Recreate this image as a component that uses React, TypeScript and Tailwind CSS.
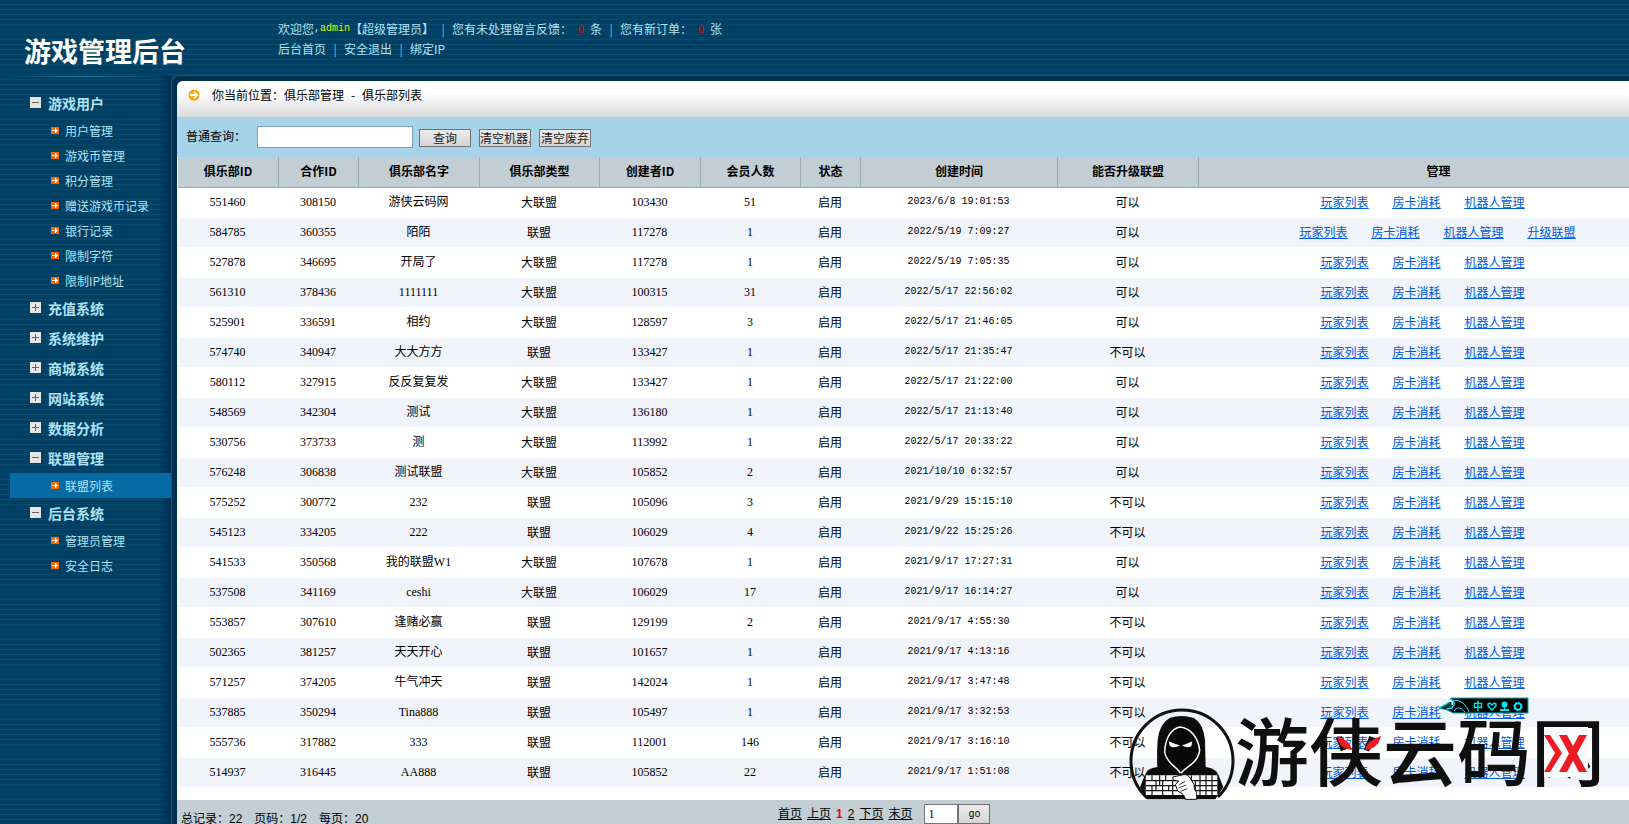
import type { ReactNode } from "react";
import clsx from "clsx";

type Group = { title: string; open: boolean; items: string[] };

const menu: Group[] = [
  {
    title: "游戏用户",
    open: true,
    items: ["用户管理", "游戏币管理", "积分管理", "赠送游戏币记录", "银行记录", "限制字符", "限制IP地址"],
  },
  { title: "充值系统", open: false, items: [] },
  { title: "系统维护", open: false, items: [] },
  { title: "商城系统", open: false, items: [] },
  { title: "网站系统", open: false, items: [] },
  { title: "数据分析", open: false, items: [] },
  { title: "联盟管理", open: true, items: ["联盟列表"] },
  { title: "后台系统", open: true, items: ["管理员管理", "安全日志"] },
];

const columns = [
  { name: "俱乐部ID", width: "w-[101px]" },
  { name: "合作ID", width: "w-[80px]" },
  { name: "俱乐部名字", width: "w-[121px]" },
  { name: "俱乐部类型", width: "w-[120px]" },
  { name: "创建者ID", width: "w-[101px]" },
  { name: "会员人数", width: "w-[100px]" },
  { name: "状态", width: "w-[60px]" },
  { name: "创建时间", width: "w-[197px]" },
  { name: "能否升级联盟", width: "w-[141px]" },
  { name: "管理", width: "" },
];

// id, partner id, name, type, creator id, members, created at, can upgrade
const clubs = [
  ["551460", "308150", "游侠云码网", "大联盟", "103430", "51", "2023/6/8 19:01:53", "可以"],
  ["584785", "360355", "陌陌", "联盟", "117278", "1", "2022/5/19 7:09:27", "可以"],
  ["527878", "346695", "开局了", "大联盟", "117278", "1", "2022/5/19 7:05:35", "可以"],
  ["561310", "378436", "1111111", "大联盟", "100315", "31", "2022/5/17 22:56:02", "可以"],
  ["525901", "336591", "相约", "大联盟", "128597", "3", "2022/5/17 21:46:05", "可以"],
  ["574740", "340947", "大大方方", "联盟", "133427", "1", "2022/5/17 21:35:47", "不可以"],
  ["580112", "327915", "反反复复发", "大联盟", "133427", "1", "2022/5/17 21:22:00", "可以"],
  ["548569", "342304", "测试", "大联盟", "136180", "1", "2022/5/17 21:13:40", "可以"],
  ["530756", "373733", "测", "大联盟", "113992", "1", "2022/5/17 20:33:22", "可以"],
  ["576248", "306838", "测试联盟", "大联盟", "105852", "2", "2021/10/10 6:32:57", "可以"],
  ["575252", "300772", "232", "联盟", "105096", "3", "2021/9/29 15:15:10", "不可以"],
  ["545123", "334205", "222", "联盟", "106029", "4", "2021/9/22 15:25:26", "不可以"],
  ["541533", "350568", "我的联盟W1", "大联盟", "107678", "1", "2021/9/17 17:27:31", "可以"],
  ["537508", "341169", "ceshi", "大联盟", "106029", "17", "2021/9/17 16:14:27", "可以"],
  ["553857", "307610", "逢赌必赢", "联盟", "129199", "2", "2021/9/17 4:55:30", "不可以"],
  ["502365", "381257", "天天开心", "联盟", "101657", "1", "2021/9/17 4:13:16", "不可以"],
  ["571257", "374205", "牛气冲天", "联盟", "142024", "1", "2021/9/17 3:47:48", "不可以"],
  ["537885", "350294", "Tina888", "联盟", "105497", "1", "2021/9/17 3:32:53", "不可以"],
  ["555736", "317882", "333", "联盟", "112001", "146", "2021/9/17 3:16:10", "不可以"],
  ["514937", "316445", "AA888", "联盟", "105852", "22", "2021/9/17 1:51:08", "不可以"],
];

const serif = "font-['Liberation_Serif','Noto_Sans_CJK_SC',serif]";
const mono = "font-['Liberation_Mono','Noto_Sans_CJK_SC',monospace] text-[10px]";

const ToggleIcon = ({ open }: { open: boolean }) => (
  <svg width="11" height="11" viewBox="0 0 11 11" aria-hidden="true" shapeRendering="crispEdges">
    <rect width="11" height="11" fill="#e6e6e6" />
    <rect x="2" y="5" width="7" height="1" fill="#666" />
    {!open && <rect x="5" y="2" width="1" height="7" fill="#666" />}
  </svg>
);

const ItemIcon = () => (
  <svg width="8" height="7" viewBox="0 0 8 7" aria-hidden="true" shapeRendering="crispEdges">
    <rect width="8" height="7" fill="#ff6600" />
    <path d="M1 3h5v1H1zM4 1h1v5H4zM5 2h1v3H5zM6 3h1v1H6z" fill="#fff" />
  </svg>
);

const Sidebar = () => (
  <aside className="w-[171px] shrink-0 bg-[linear-gradient(to_right,transparent_160px,#00304f)]">
    <div className="h-px mt-px bg-[linear-gradient(to_right,transparent_5%,#2a7aa5_45%,transparent_95%)]" />
    <nav className="pt-[11px]">
      {menu.map((group) => (
        <div key={group.title}>
          <button
            type="button"
            aria-expanded={group.open}
            className="flex h-[30px] w-full items-center gap-[7px] pb-px pl-[30px] text-sm font-bold text-[#b0e4f6]"
          >
            <ToggleIcon open={group.open} />
            {group.title}
          </button>
          {group.items.map((item) => (
            <a
              key={item}
              href="#"
              className={clsx(
                "ml-[10px] flex h-[25px] items-center gap-[6px] pl-[41px] text-xs text-[#b0e4f6]",
                item === "联盟列表" && "bg-[#066aa5]"
              )}
            >
              <ItemIcon />
              {item}
            </a>
          ))}
        </div>
      ))}
    </nav>
  </aside>
);

const Separator = () => <span className="w-[18px] text-center text-[#7fb9d0]">|</span>;

const Count = ({ children }: { children: ReactNode }) => (
  <span className={clsx(serif, "w-[18px] text-center text-[#f00000]")}>{children}</span>
);

const Header = () => (
  <header className="flex h-[75px] shrink-0 text-xs text-[#b0e4f6]">
    <h1 className="w-[278px] shrink-0 pl-6 pt-[31px] text-[27px] leading-10 font-bold text-white">游戏管理后台</h1>
    <div className="pt-[19px] leading-5">
      <div className="flex h-5">
        欢迎您<span className={mono}>,</span>
        <span className={clsx(mono, "text-[#e0f000]")}>admin</span>【超级管理员】
        <Separator />
        您有未处理留言反馈：<Count>0</Count>条
        <Separator />
        您有新订单：<Count>0</Count>张
      </div>
      <div className="flex h-5">
        <a href="#">后台首页</a>
        <Separator />
        <a href="#">安全退出</a>
        <Separator />
        <a href="#">绑定IP</a>
      </div>
    </div>
  </header>
);

const Breadcrumb = () => (
  <div className="flex h-9 items-start gap-3 rounded-tl-md bg-linear-to-b from-white from-30% to-[#dadada] pt-1 pl-[11px] text-xs leading-5">
    <svg className="mt-1" width="12" height="12" viewBox="0 0 12 12" aria-hidden="true">
      <circle cx="6" cy="6" r="5.6" fill="#ffa500" />
      <path d="M2 6h7M6 2.8 9.2 6 6 9.2" fill="none" stroke="#fff" strokeWidth="1.8" />
    </svg>
    <div className="flex">
      你当前位置：俱乐部管理<span className="w-[18px] text-center">-</span>俱乐部列表
    </div>
  </div>
);

const SearchBar = () => {
  const button =
    "h-[18px] w-[52px] overflow-hidden border border-[#707070] bg-linear-to-b from-[#eee] to-[#d4d4d4] text-xs leading-4 whitespace-nowrap text-[#222]";
  return (
    <form onSubmit={(e) => e.preventDefault()} className="flex h-10 items-center bg-[#a6d3ea] pl-[9px] text-xs">
      <label htmlFor="query" className="w-[71px] pb-[2px]">
        普通查询：
      </label>
      <input id="query" type="text" className="mr-[6px] h-[22px] w-[156px] border border-[#7f9db9] bg-white px-1" />
      <div className="flex gap-2 pt-px">
        <button type="submit" className={button}>查询</button>
        <button type="button" className={button}>清空机器人</button>
        <button type="button" className={button}>清空废弃</button>
      </div>
    </form>
  );
};

const ClubTable = () => (
  <table className="ml-px w-full min-w-[1500px] table-fixed border-separate border-spacing-0 text-center text-xs">
    <thead>
      <tr className="h-[31px] bg-[#c2ced3]">
        {columns.map((col) => (
          <th
            key={col.name}
            className={clsx("border-b border-[#9aaab3] p-0 pb-[3px] font-bold not-last:border-r", col.width)}
          >
            {col.name}
          </th>
        ))}
      </tr>
    </thead>
    <tbody>
      {clubs.map(([id, partner, name, type, creator, members, created, upgrade], i) => (
        <tr key={id} className="h-[30px] even:bg-[#f0f3f9] *:border-b *:border-white *:p-0 *:pr-[2px] *:pb-px">
          <td className={serif}>{id}</td>
          <td className={serif}>{partner}</td>
          <td className={serif}>{name}</td>
          <td>{type}</td>
          <td className={serif}>{creator}</td>
          <td className={serif}>{members}</td>
          <td>启用</td>
          <td className={mono}>{created}</td>
          <td>{upgrade}</td>
          <td>
            <div className={clsx("flex justify-center gap-6 text-[#0058e0] underline", i !== 1 && "pr-[30px]")}>
              <a href="#">玩家列表</a>
              <a href="#">房卡消耗</a>
              <a href="#">机器人管理</a>
              {i === 1 && <a href="#">升级联盟</a>}
            </div>
          </td>
        </tr>
      ))}
    </tbody>
  </table>
);

const Footer = () => (
  <footer className="mt-3 flex h-[38px] min-w-[1500px] items-start bg-[#c2ced3] pl-1 text-xs leading-5 font-['Liberation_Sans','Noto_Sans_CJK_SC',sans-serif]">
    <div className="flex w-[597px] gap-3 pt-[9px]">
      <span>总记录：22</span>
      <span>页码：1/2</span>
      <span>每页：20</span>
    </div>
    <div className="flex items-start gap-[5px] pt-1">
      <a href="#" className="underline">首页</a>
      <a href="#" className="underline">上页</a>
      <span className="font-bold text-[#f00000]">1</span>
      <a href="#" className="underline">2</a>
      <a href="#" className="underline">下页</a>
      <a href="#" className="underline">末页</a>
      <form onSubmit={(e) => e.preventDefault()} className="ml-[7px] flex">
        <input
          aria-label="页码"
          defaultValue="1"
          className={clsx(serif, "h-5 w-[34px] border border-[#767676] bg-white px-[3px]")}
        />
        <button
          type="submit"
          className={clsx(mono, "h-5 w-8 border border-[#707070] bg-linear-to-b from-[#eee] to-[#d4d4d4]")}
        >
          go
        </button>
      </form>
    </div>
  </footer>
);

const HackerLogo = () => (
  <svg width="120" height="105" viewBox="0 0 360 315" aria-hidden="true">
    <path d="M78 291A153 153 0 1 1 294 291" fill="none" stroke="#111" strokeWidth="9" />
    <path
      d="M76 296V222Q80 205 112 201Q110 165 113 120Q118 70 150 53Q184 42 222 54Q250 72 255 120Q256 165 257 201Q290 206 294 224L307 262L284 297Z"
      fill="#0c0c0c"
    />
    <path d="M78 226H292V285H78Z" fill="#fff" />
    <path
      d="M78 242H292M78 257H292M78 272H292M96 226V242M119 226V257M137 226V242M108 242V272M128 242V285M96 257V285M146 257V272M158 242V285M214 226V257M240 226V285M258 226V285M276 226V285M226 242V272"
      fill="none"
      stroke="#111"
      strokeWidth="3.5"
    />
    <path d="M60 262 76 222V285H294V222L310 262 286 298H80Z" fill="#0c0c0c" fillRule="evenodd" clipPath="url(#rim)" />
    <clipPath id="rim">
      <path d="M60 220H78V300H60ZM292 220H312V300H292ZM78 284H292V300H78Z" />
    </clipPath>
    <path
      d="M181 220C176 203 140 193 134 156C136 114 153 86 180 81C211 84 235 112 239 151C234 193 190 203 184 220"
      fill="#080808"
      stroke="#fff"
      strokeWidth="4.5"
    />
    <path d="M146 124Q163 132 180 136Q165 146 150 139ZM217 124Q201 132 186 136Q200 146 214 139Z" fill="#fff" />
    <path
      d="M158 231 186 225Q204 219 214 240L222 254Q220 268 230 278V298H196Q194 282 174 274L166 254 176 243 160 241Z"
      fill="#fff"
      stroke="#111"
      strokeWidth="3"
    />
    <path d="M178 254 196 244M176 264 198 255M182 274 202 266" stroke="#111" strokeWidth="2.5" fill="none" />
  </svg>
);

const Watermark = () => (
  <div className="pointer-events-none absolute right-6 bottom-[19px] flex items-start">
    <HackerLogo />
    <div className="relative -ml-[5px] text-[74px] leading-[96px] font-medium text-[#0f0f0f]">
      游侠云码网
      <svg className="absolute top-0 left-0" width="370" height="105" viewBox="0 0 370 105" aria-hidden="true">
        <path d="M102 36Q115 40 117 50Q104 49 102 36ZM146 36Q132 40 130 50Q143 49 146 36Z" fill="#ed1c24" />
        <path d="M309 27H353V77H309Z" fill="#f8fafc" />
        <path d="M309 35H315L327 53 315 72H309L320 53ZM324 35H332L352 72H344Z" fill="#ed1c24" />
        <path d="M352 35H344L324 72H332Z" fill="#ed1c24" />
      </svg>
    </div>
  </div>
);

const InputMethodBar = () => (
  <svg
    className="absolute right-[100px] bottom-[109px]"
    width="90"
    height="18"
    viewBox="0 0 90 18"
    role="img"
    aria-label="输入法"
  >
    <path d="M12 1H89V16H14L8 13 0 11 8 7Z" fill="#000" stroke="#00b4bc" />
    <path d="M0 11 9 6 12 2Q18 6 13 11L8 12" fill="#063c44" stroke="#19dbe8" strokeWidth="1.4" />
    <path d="M9 4Q15 3 13 8" fill="none" stroke="#fff" strokeWidth="1.6" />
    <path d="M14 3Q26 3 30 15M15 14Q19 7 26 15" fill="none" stroke="#19dbe8" />
    <text x="34" y="13" fontSize="10" fontWeight="700" fill="#00e5f5">中</text>
    <path d="M53 13 49 9V7L51 6 53 8 55 6 57 7V9Z" fill="none" stroke="#00e5f5" strokeWidth="1.4" />
    <circle cx="65.500" cy="7.500" r="3" fill="#00e5f5" />
    <path d="M65 9h1v3h4v2h-9v-2h4z" fill="#00e5f5" />
    <circle cx="79" cy="9.500" r="3.300" fill="none" stroke="#00e5f5" strokeWidth="2" />
    <circle cx="79" cy="9.500" r="4.300" fill="none" stroke="#00e5f5" strokeWidth="1" strokeDasharray="1.5 1.8" />
  </svg>
);

const App = () => {
  return (
    <div className="relative flex h-screen flex-col overflow-hidden bg-[#004064] bg-[repeating-linear-gradient(to_bottom,#004064_0_4px,#094a6b_4px_5px)] font-['Noto_Sans_CJK_SC',sans-serif] text-black">
      <Header />
      <div className="flex min-h-0 flex-1">
        <Sidebar />
        <div className="min-w-0 flex-1 rounded-tl-lg border-t border-l border-[#1a5675] bg-[#003050] pt-[5px] pl-[5px]">
          <main className="h-full overflow-hidden rounded-tl-md bg-white">
            <Breadcrumb />
            <SearchBar />
            <ClubTable />
            <Footer />
          </main>
        </div>
      </div>
      <Watermark />
      <InputMethodBar />
    </div>
  );
};

export default App;
